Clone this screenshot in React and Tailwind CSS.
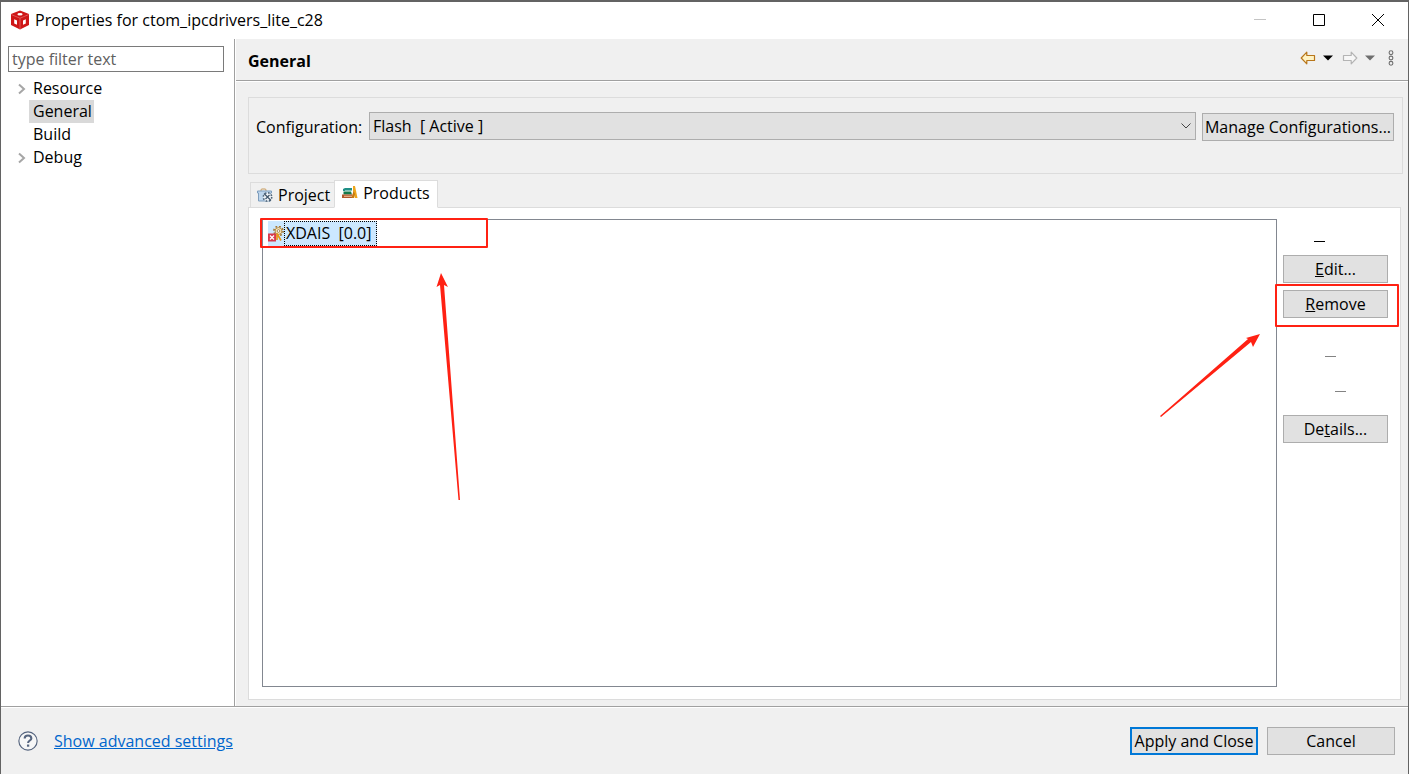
/**
 * Properties dialog: category tree on the left, General page on the right
 */

import React, { useState } from 'react';

const IconCube = () => (
  <svg className="w-5 h-5" viewBox="0 0 20 20">
    <path d="M10 0.5L19 4V15L10 19.5L1 15V4Z" fill="#cf1717" />
    <path d="M1.3 4.6L10 8.2L18.7 4.6M10 8.2V19.2" fill="none" stroke="#e57070" strokeWidth="0.7" />
    <ellipse cx="10" cy="4.2" rx="2.6" ry="1.2" fill="#fff" />
    <path d="M4.2 9.2L7 10.4V14.8L4.2 13.4Z" fill="#fff" />
    <path d="M13 10.4L15.8 9.2V13.4L13 14.8Z" fill="#fff" />
  </svg>
);

const IconTreeArrow = () => (
  <svg className="w-2 h-3" viewBox="0 0 8 12" fill="none" stroke="#a6a6a6" strokeWidth="2">
    <path d="M1 1.5L6 6L1 10.5" />
  </svg>
);

const IconArrow = ({ stroke, fill, className }) => (
  <svg className={className} viewBox="0 0 16 14">
    <path d="M1.2 7L6.8 1.2V4.5H14.5V9.5H6.8V12.8Z" fill={fill} stroke={stroke} strokeWidth="1.2" strokeLinejoin="round" />
  </svg>
);

const IconCaret = ({ fill }) => (
  <svg className="w-[10px] h-[6px]" viewBox="0 0 10 6">
    <path d="M0 0.5H10L5 5.5Z" fill={fill} />
  </svg>
);

const IconMenu = () => (
  <svg className="w-[6px] h-4" viewBox="0 0 6 16" fill="none" stroke="#6e6e6e" strokeWidth="1.1">
    <circle cx="3" cy="2.7" r="1.9" />
    <circle cx="3" cy="8" r="1.9" />
    <circle cx="3" cy="13.3" r="1.9" />
  </svg>
);

const IconProject = () => (
  <svg className="w-4 h-4" viewBox="0 0 16 16">
    <path d="M4 4V3Q4 2 5 2H8Q9 2 9 3V4" fill="none" stroke="#c79a5b" />
    <path d="M0.5 4H14.5V6H13.5V14H1.5V6H0.5Z" fill="#bdd5ec" stroke="#7d9dbd" />
    <circle cx="10.5" cy="10" r="4.2" fill="#f2f6fa" stroke="#4f6479" strokeWidth="1.6" strokeDasharray="1.7 1.6" />
    <path d="M7 6.5L14 13.5M12.5 8L8.5 12" stroke="#41566b" strokeWidth="1.3" />
  </svg>
);

const IconProducts = () => (
  <svg className="w-4 h-4" viewBox="0 0 16 16">
    <path d="M1 4L3 3H10V6H1Z" fill="#1f8f86" />
    <path d="M3 5.5H10.5V6.5H3Z" fill="#e9f4ee" />
    <path d="M1.5 6.5H9L10 9.5H1.5Z" fill="#157a4b" />
    <path d="M0 9.5H10.5V13H0Z" fill="#b0552a" />
    <path d="M2 10.7H10.5V11.8H2Z" fill="#f0c49a" />
    <path d="M11 1L13 1L15.5 13H13L11 6Z" fill="#eda51c" />
    <path d="M9.5 13L11.5 6L13 9L12 13Z" fill="#c97b10" />
  </svg>
);

const IconProductError = () => (
  <svg className="w-4 h-4" viewBox="0 0 16 16">
    <circle cx="10.5" cy="5" r="4.6" fill="none" stroke="#a5752e" strokeWidth="1.6" strokeDasharray="1.8 1.8" />
    <circle cx="10.5" cy="5" r="3.4" fill="#fdf0c8" stroke="#a87b35" strokeWidth="0.9" />
    <circle cx="10.5" cy="5" r="1.4" fill="#fff" stroke="#8d6a35" strokeWidth="0.8" />
    <path d="M9 7.5L13 14.500M9 8V14" stroke="#e8971a" strokeWidth="1.7" />
    <path d="M0 7.500H8V15.500H0Z" fill="#d93a4c" />
    <path d="M2 9.500L6 13.500M6 9.500L2 13.500" stroke="#fff" strokeWidth="1.3" />
  </svg>
);

const IconHelp = () => (
  <svg className="w-5 h-5" viewBox="0 0 21 21" fill="none" stroke="#56657f">
    <circle cx="10.5" cy="10.5" r="9.6" strokeWidth="1.2" fill="#f7f7f7" />
    <path d="M7 8Q7 4.8 10.5 4.8T14 7.8C14 10 10.6 10 10.6 12.6" strokeWidth="2.2" />
    <path d="M9.4 14.2H11.8V16.5H9.4Z" fill="#56657f" stroke="none" />
  </svg>
);

const TREE = [
  { id: 'resource', label: 'Resource', expandable: true },
  { id: 'general', label: 'General' },
  { id: 'build', label: 'Build' },
  { id: 'debug', label: 'Debug', expandable: true }
];

const TABS = [
  { id: 'project', label: 'Project', Icon: IconProject },
  { id: 'products', label: 'Products', Icon: IconProducts }
];

const BUTTON = 'h-7 border border-[#adadad] bg-[#e1e1e1] text-center whitespace-nowrap';

// Button whose caption is cut down to its mnemonic underline
const BlankButton = ({ label, className }) => (
  <button aria-label={label} className={`h-7 flex items-center ${className}`}>
    <span className="w-[11px] h-4 border-b border-current" />
  </button>
);

const TitleBar = () => (
  <header className="h-[37px] shrink-0 flex items-center bg-white pl-[9px] pr-px pb-px">
    <IconCube />
    <h1 className="grow pl-[5px]">Properties for ctom_ipcdrivers_lite_c28</h1>
    <button aria-label="Minimize" className="w-[59px] h-full flex items-center justify-center">
      <svg className="w-3 h-3" viewBox="0 0 12 12"><path d="M0 5.5H12" stroke="#c4c4c4" /></svg>
    </button>
    <button aria-label="Maximize" className="w-[59px] h-full flex items-center justify-center">
      <svg className="w-3 h-3" viewBox="0 0 12 12"><path d="M0.5 0.5H11.5V11.5H0.5Z" fill="none" stroke="#000" /></svg>
    </button>
    <button aria-label="Close" className="w-[59px] h-full flex items-center justify-center">
      <svg className="w-3 h-3" viewBox="0 0 12 12"><path d="M0 0L12 12M12 0L0 12" stroke="#000" /></svg>
    </button>
  </header>
);

const Sidebar = ({ selected, onSelect }) => (
  <aside className="w-[234px] shrink-0 border-r border-[#a0a0a0] bg-white pt-[7px] pl-[7px] pr-2.5">
    <input
      type="text"
      aria-label="Filter"
      placeholder="type filter text"
      className="block w-full h-[26px] border border-[#7a7a7a] px-[3px] placeholder:text-[#606060] outline-none"
    />
    <ul className="pt-[5px]">
      {TREE.map(({ id, label, expandable }) => (
        <li key={id} className="h-[23px] flex items-center">
          <span className="w-[21px] flex justify-end pr-[3px]">{expandable && <IconTreeArrow />}</span>
          <button
            onClick={() => onSelect(id)}
            className={`h-[23px] leading-[23px] pl-1 pr-0.5 ${selected === id ? 'bg-[#d9d9d9]' : ''}`}
          >
            {label}
          </button>
        </li>
      ))}
    </ul>
  </aside>
);

const ProductsPanel = () => (
  <div className="grow flex border border-[#dcdcdc] bg-white mr-0.5 pt-[11px] pl-[13px] pr-3 pb-3">
    <div className="relative grow border border-[#828790] pt-px pl-[5px]">
      <button className="flex items-center bg-[#cce8ff]">
        <IconProductError />
        <span className="h-[25px] leading-[23px] border border-dotted border-black pl-px pr-1">XDAIS&nbsp; [0.0]</span>
      </button>

      {/* Callouts over the list */}
      <div className="absolute -left-[3px] -top-0.5 w-[228px] h-[30px] border-2 border-[#ff2113] rounded-[1px]" />
      <svg className="absolute left-[173px] top-[53px] w-[26px] h-[228px]" viewBox="0 0 26 228">
        <path d="M5 0L12 14L8 12L24 227H22.5L4 12L0.5 14Z" fill="#ff2113" />
      </svg>
      <svg className="absolute right-[15px] top-[113px] w-[102px] h-[84px]" viewBox="0 0 102 84">
        <path d="M101 1L94 14L92 9L2 84L1 83L89 6L87 5Z" fill="#ff2113" />
      </svg>
    </div>

    <div className="w-[105px] ml-1.5 mt-px flex flex-col gap-[7px]">
      <BlankButton label="Add" className="pl-[31px]" />
      <button className={BUTTON}><u>E</u>dit...</button>
      <div className="relative flex flex-col">
        <button className={BUTTON}><u>R</u>emove</button>
        <div className="absolute -left-2 -right-[11px] -top-1.5 -bottom-[9px] border-2 border-[#ff2113] rounded-[1px] pointer-events-none" />
      </div>
      <BlankButton label="Up" className="mt-2.5 pl-[42px] text-[#838383]" />
      <BlankButton label="Down" className="pl-[52px] text-[#838383]" />
      <button className={`${BUTTON} mt-2.5`}>De<u>t</u>ails...</button>
    </div>
  </div>
);

const App = () => {
  const [page, setPage] = useState('general');
  const [activeTab, setActiveTab] = useState('products');

  return (
    <div className="min-h-screen flex flex-col border-t-2 border-x border-[#636363] bg-[#f0f0f0] text-black text-base leading-5 font-['Open_Sans',sans-serif]">
      <TitleBar />

      <div className="grow flex">
        <Sidebar selected={page} onSelect={setPage} />

        <main className="grow flex flex-col border-l border-white">
          <div className="h-[42px] flex items-center border-b border-[#a0a0a0] pl-3 pr-3.5 pt-0.5">
            <h2 className="grow font-bold">General</h2>
            <div className="flex items-center pb-1.5">
              <button aria-label="Back"><IconArrow stroke="#b8761a" fill="#fff3c4" className="w-4 h-[14px]" /></button>
              <button aria-label="Back history" className="ml-[7px]"><IconCaret fill="#000" /></button>
              <button aria-label="Forward" className="ml-[9px]"><IconArrow stroke="#b4b4b4" fill="#f7f7f7" className="w-4 h-[14px] rotate-180" /></button>
              <button aria-label="Forward history" className="ml-[7px]"><IconCaret fill="#6e6e6e" /></button>
              <button aria-label="Menu" className="ml-[13px]"><IconMenu /></button>
            </div>
          </div>

          <div className="grow flex flex-col border-t border-white pt-[15px] pl-3 pr-[5px] pb-1.5">
            <div className="h-[77px] flex items-start border border-[#dcdcdc] pt-3.5 pl-[7px] pr-2">
              <label htmlFor="configuration" className="w-[113px] shrink-0 pt-[5px]">Configuration:</label>
              <div className="relative grow">
                <select
                  id="configuration"
                  className="block w-full h-7 appearance-none border border-[#adadad] bg-[#e1e1e1] pl-[3px] pr-6 outline-none"
                >
                  <option>Flash&nbsp; [ Active ]</option>
                </select>
                <svg className="absolute right-[5px] top-[11px] w-[10px] h-[6px] pointer-events-none" viewBox="0 0 10 6" fill="none" stroke="#444">
                  <path d="M0.5 0.5L5 5L9.5 0.5" />
                </svg>
              </div>
              <button className={`${BUTTON} w-48 shrink-0 ml-1.5 mt-px`}>Manage Configurations...</button>
            </div>

            {/* Tabs */}
            <div className="h-[34px] -mb-px flex items-end pl-0.5 z-10">
              {TABS.map(({ id, label, Icon }) => (
                <button
                  key={id}
                  onClick={() => setActiveTab(id)}
                  className={`flex items-center gap-[5px] border border-[#dcdcdc] ${activeTab === id ? 'h-7 bg-white border-b-white px-[7px] pb-0.5' : 'h-[26px] border-r-0 pl-1.5 pr-1'}`}
                >
                  <Icon />
                  {label}
                </button>
              ))}
            </div>
            <ProductsPanel />
          </div>
        </main>
      </div>

      <footer className="h-[68px] shrink-0 flex items-center border-t border-[#a0a0a0] pl-[17px] pr-[13px] shadow-[inset_0_1px_0_#fff]">
        <button aria-label="Help"><IconHelp /></button>
        <a href="#advanced" className="ml-4 text-[#0066cc] underline">Show advanced settings</a>
        <button className="ml-auto w-32 h-7 border-2 border-[#0078d7] bg-[#e1e1e1] whitespace-nowrap">Apply and Close</button>
        <button className={`${BUTTON} w-32 ml-[9px]`}>Cancel</button>
      </footer>
    </div>
  );
};

export default App;
